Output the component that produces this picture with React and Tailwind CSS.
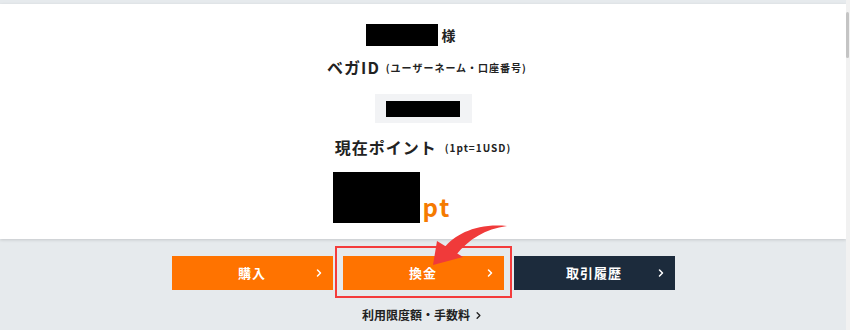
import { FiChevronRight } from 'react-icons/fi';

const jp = { fontFamily: '"Noto Sans CJK JP", "Noto Sans", sans-serif' };

function ActionButton({ label, dark, highlight }) {
  return (
    <div className="relative">
      {highlight && (
        <div className="absolute -left-[8px] -right-[8px] -top-[10px] -bottom-[8px] border-2 border-[#f43c3c]" />
      )}
      <button
        className={`relative w-[161px] h-[34px] flex items-center justify-center text-white text-[13px] font-bold tracking-[1px] ${dark ? 'bg-[#1c2b3c]' : 'bg-[#ff7300]'}`}
      >
        {label}
        <FiChevronRight className="absolute right-[8px] top-[11px]" size={12} strokeWidth={3} />
      </button>
    </div>
  );
}

export default function App() {
  return (
    <div className="relative w-[850px] h-[330px] flex bg-[#e6eaed] overflow-hidden text-[#222]" style={jp}>
      <div className="flex-1 flex flex-col pt-[4px]">
        {/* Account card */}
        <div className="h-[235px] bg-white shadow-[0_1px_3px_rgba(0,0,0,0.15)] flex flex-col items-center">
          <div className="w-full flex justify-center items-center pr-[25px] mt-[20px] h-[22px]">
            <div className="w-[72px] h-[22px] bg-black" />
            <span className="ml-[4px] text-[14px] font-bold">様</span>
          </div>

          <div className="mt-[12px] h-[18px] flex items-center pl-[8px]">
            <span className="text-[16px] font-bold tracking-[1px]">ベガID</span>
            <span className="ml-[6px] text-[10px] font-bold tracking-[1px]">(ユーザーネーム・口座番号)</span>
          </div>

          <div className="mt-[18px] w-[97px] h-[29px] bg-[#f2f3f5] flex items-center justify-center">
            <div className="w-[74px] h-[16px] bg-black" />
          </div>

          <div className="mt-[15px] h-[18px] flex items-center">
            <span className="text-[16px] font-bold tracking-[1px]">現在ポイント</span>
            <span className="ml-[8px] text-[10px] font-bold tracking-[1px]">(1pt=1USD)</span>
          </div>

          <div className="mt-[16px] flex items-end pr-[62px]">
            <div className="w-[87px] h-[51px] bg-black" />
            <span className="ml-[3px] mb-[2px] text-[24px] leading-[28px] font-semibold text-[#f57a00] tracking-[2px]">pt</span>
          </div>
        </div>

        {/* Actions */}
        <div className="mt-[17px] flex justify-center gap-[10px]">
          <ActionButton label="購入" />
          <ActionButton label="換金" highlight />
          <ActionButton label="取引履歴" dark />
        </div>

        <div className="mt-[16px] flex justify-center items-center text-[12px] font-bold">
          利用限度額・手数料
          <FiChevronRight className="ml-[3px]" size={11} strokeWidth={3} />
        </div>
      </div>

      {/* Scrollbar */}
      <div className="w-[4px] bg-[#f1f1f1] pt-[12px]">
        <div className="w-[3px] h-[46px] bg-[#c4c4c4] rounded-full" />
      </div>

      {/* Red annotation arrow */}
      <svg className="absolute left-[425px] top-[220px]" width="90" height="50" viewBox="0 0 90 50">
        <path d="M19,28 C30,14 52,3 82,6 C60,9 44,19 31,35 Z" fill="#f03a3a" />
        <path d="M8,45 L12,21 L38,37 Z" fill="#f03a3a" />
      </svg>
    </div>
  );
}
